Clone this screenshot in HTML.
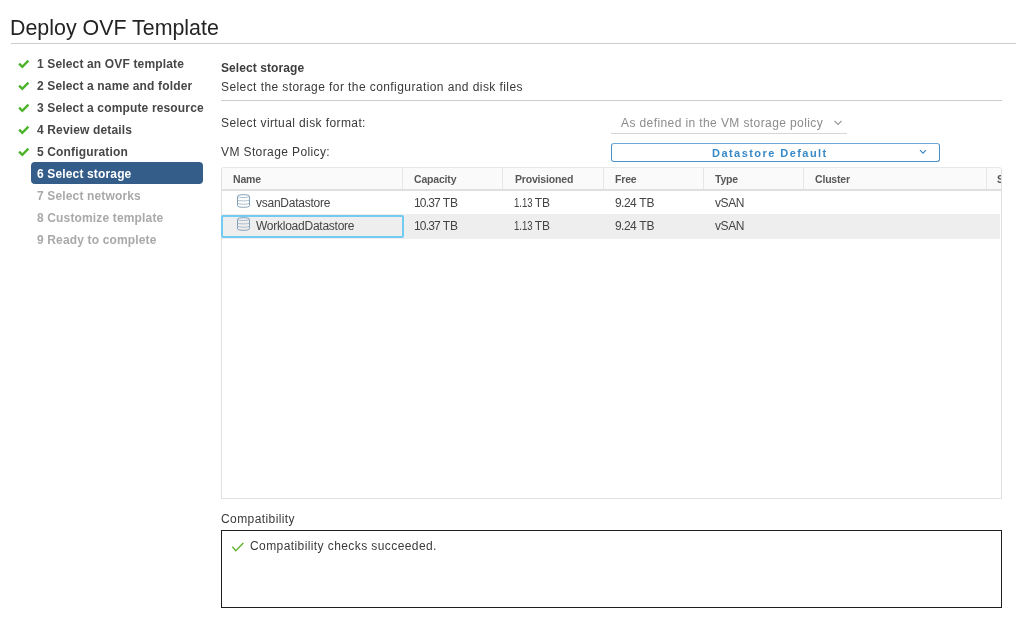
<!DOCTYPE html>
<html><head><meta charset="utf-8">
<style>
*{margin:0;padding:0;box-sizing:border-box}
html,body{width:1022px;height:622px;overflow:hidden;background:#fff}
body{position:relative;font-family:"Liberation Sans",sans-serif;color:#333}
.a{position:absolute;white-space:nowrap;will-change:transform}
.t{line-height:12px;height:12px}
.title{left:10px;top:18px;font-size:21.4px;line-height:21px;color:#242424}
.hr{position:absolute;height:1px;background:#ccc}
.nav{left:37px;font-size:12px;font-weight:bold;color:#474747;letter-spacing:0.15px}
.nav.off{color:#a9a9a9}
.nav.sel{color:#fff}
.chk{position:absolute;left:18px;width:12px;height:10px}
.sel-bg{position:absolute;left:31px;top:162px;width:172px;height:22px;background:#345d8a;border-radius:4px}
.reg{font-size:12px;letter-spacing:0.33px;color:#3a3a3a}
.th{font-size:10.5px;font-weight:bold;color:#585858;letter-spacing:-0.18px}
.td{font-size:12px;color:#444;letter-spacing:-0.25px}
.num{font-size:11.5px;letter-spacing:-0.35px}
</style></head>
<body>
<div class="a title">Deploy OVF Template</div>
<div class="hr" style="left:11px;top:43px;width:1005px"></div>

<!-- nav -->
<div class="sel-bg"></div>
<svg class="chk" style="top:59px" viewBox="0 0 12 10"><path d="M1.1 4.7 L4.3 7.9 L10.4 1.7" fill="none" stroke="#4db32b" stroke-width="2.4"/></svg>
<svg class="chk" style="top:81px" viewBox="0 0 12 10"><path d="M1.1 4.7 L4.3 7.9 L10.4 1.7" fill="none" stroke="#4db32b" stroke-width="2.4"/></svg>
<svg class="chk" style="top:103px" viewBox="0 0 12 10"><path d="M1.1 4.7 L4.3 7.9 L10.4 1.7" fill="none" stroke="#4db32b" stroke-width="2.4"/></svg>
<svg class="chk" style="top:125px" viewBox="0 0 12 10"><path d="M1.1 4.7 L4.3 7.9 L10.4 1.7" fill="none" stroke="#4db32b" stroke-width="2.4"/></svg>
<svg class="chk" style="top:147px" viewBox="0 0 12 10"><path d="M1.1 4.7 L4.3 7.9 L10.4 1.7" fill="none" stroke="#4db32b" stroke-width="2.4"/></svg>
<div class="a t nav" style="top:58px">1 Select an OVF template</div>
<div class="a t nav" style="top:80px">2 Select a name and folder</div>
<div class="a t nav" style="top:102px">3 Select a compute resource</div>
<div class="a t nav" style="top:124px">4 Review details</div>
<div class="a t nav" style="top:146px">5 Configuration</div>
<div class="a t nav sel" style="top:168px">6 Select storage</div>
<div class="a t nav off" style="top:190px">7 Select networks</div>
<div class="a t nav off" style="top:212px">8 Customize template</div>
<div class="a t nav off" style="top:234px">9 Ready to complete</div>

<!-- content -->
<div class="a t" style="left:221px;top:62px;font-size:12px;font-weight:bold;color:#3d3d3d;letter-spacing:0.08px">Select storage</div>
<div class="a t reg" style="left:221px;top:80.5px;letter-spacing:0.42px">Select the storage for the configuration and disk files</div>
<div class="hr" style="left:221px;top:100px;width:781px"></div>

<div class="a t reg" style="left:221px;top:117px;letter-spacing:0.4px">Select virtual disk format:</div>
<div class="a t reg" style="left:621px;top:117px;color:#8c8c8c;letter-spacing:0.4px">As defined in the VM storage policy</div>
<svg class="a" style="left:833px;top:119px" width="10" height="8" viewBox="0 0 10 8"><path d="M1.5 2 L5 5.5 L8.5 2" fill="none" stroke="#9a9a9a" stroke-width="1.1"/></svg>
<div class="hr" style="left:611px;top:133px;width:236px;background:#d6d6d6"></div>

<div class="a t reg" style="left:221px;top:146px;letter-spacing:0.39px">VM Storage Policy:</div>
<div class="a" style="left:611px;top:143px;width:329px;height:19px;border:1px solid #4b90c9;border-top-color:#6fa8d6;border-radius:3px"></div>
<div class="a t" style="left:712px;top:147px;font-size:11px;font-weight:bold;color:#3689c6;letter-spacing:1.45px">Datastore Default</div>
<svg class="a" style="left:918px;top:148px" width="10" height="8" viewBox="0 0 10 8"><path d="M2 2.2 L5 5.2 L8 2.2" fill="none" stroke="#3b87c2" stroke-width="1.2"/></svg>

<!-- table -->
<div class="a" style="left:221px;top:167px;width:781px;height:332px;border:1px solid #e0e0e0;border-top-color:#e8e8e8;border-radius:3px 3px 0 0;overflow:hidden">
  <div class="a" style="left:0;top:0;width:779px;height:23px;background:#fafafa;border-bottom:2px solid #dfdfdf"></div>
  <div class="a" style="left:180px;top:0;width:1px;height:21px;background:#e6e6e6"></div>
  <div class="a" style="left:280px;top:0;width:1px;height:21px;background:#e6e6e6"></div>
  <div class="a" style="left:381px;top:0;width:1px;height:21px;background:#e6e6e6"></div>
  <div class="a" style="left:481px;top:0;width:1px;height:21px;background:#e6e6e6"></div>
  <div class="a" style="left:581px;top:0;width:1px;height:21px;background:#e6e6e6"></div>
  <div class="a" style="left:764px;top:0;width:1px;height:21px;background:#e6e6e6"></div>
  <div class="a" style="left:0;top:46px;width:778px;height:25px;background:#eeeeee"></div>
</div>
<div class="a" style="left:221px;top:215px;width:183px;height:23px;border:2px solid #72ccf2;border-radius:2px"></div>
<div class="a t th" style="left:233px;top:173px">Name</div>
<div class="a t th" style="left:414px;top:173px">Capacity</div>
<div class="a t th" style="left:515px;top:173px">Provisioned</div>
<div class="a t th" style="left:615px;top:173px">Free</div>
<div class="a t th" style="left:715px;top:173px">Type</div>
<div class="a t th" style="left:815px;top:173px">Cluster</div>
<div class="a" style="left:990px;top:168px;width:11px;height:21px;overflow:hidden"><div class="a t th" style="left:7px;top:5px">S</div></div>

<svg class="a" style="left:236px;top:193px" width="15" height="16" viewBox="0 0 15 16"><g fill="none" stroke="#819fb7" stroke-width="1"><path d="M1.5 3.2 C1.5 1.2 13.5 1.2 13.5 3.2 L13.5 12.8 C13.5 14.8 1.5 14.8 1.5 12.8 Z"/><path d="M1.5 3.2 C1.5 5 13.5 5 13.5 3.2" stroke="#a9bccb"/><path d="M1.5 6.7 C1.5 8.3 13.5 8.3 13.5 6.7" stroke="#a9bccb"/><path d="M1.5 10 C1.5 11.6 13.5 11.6 13.5 10" stroke="#a9bccb"/></g></svg>
<svg class="a" style="left:236px;top:216px" width="15" height="16" viewBox="0 0 15 16"><g fill="none" stroke="#819fb7" stroke-width="1"><path d="M1.5 3.2 C1.5 1.2 13.5 1.2 13.5 3.2 L13.5 12.8 C13.5 14.8 1.5 14.8 1.5 12.8 Z"/><path d="M1.5 3.2 C1.5 5 13.5 5 13.5 3.2" stroke="#a9bccb"/><path d="M1.5 6.7 C1.5 8.3 13.5 8.3 13.5 6.7" stroke="#a9bccb"/><path d="M1.5 10 C1.5 11.6 13.5 11.6 13.5 10" stroke="#a9bccb"/></g></svg>
<div class="a t td" style="left:256px;top:197px">vsanDatastore</div>
<div class="a t td" style="left:414px;top:197px;letter-spacing:0"><span style="letter-spacing:-0.85px">10.37</span><span style="letter-spacing:-0.1px"> TB</span></div>
<div class="a t td" style="left:514px;top:197px;letter-spacing:0"><span style="display:inline-block;transform:scaleX(0.8);transform-origin:0 0;width:17.8px">1.13</span><span style="letter-spacing:-0.1px"> TB</span></div>
<div class="a t td" style="left:615px;top:197px;letter-spacing:0"><span style="letter-spacing:-0.55px">9.24</span><span style="letter-spacing:-0.1px"> TB</span></div>
<div class="a t td" style="left:715px;top:197px;letter-spacing:-0.4px">vSAN</div>
<div class="a t td" style="left:256px;top:220px">WorkloadDatastore</div>
<div class="a t td" style="left:414px;top:220px;letter-spacing:0"><span style="letter-spacing:-0.85px">10.37</span><span style="letter-spacing:-0.1px"> TB</span></div>
<div class="a t td" style="left:514px;top:220px;letter-spacing:0"><span style="display:inline-block;transform:scaleX(0.8);transform-origin:0 0;width:17.8px">1.13</span><span style="letter-spacing:-0.1px"> TB</span></div>
<div class="a t td" style="left:615px;top:220px;letter-spacing:0"><span style="letter-spacing:-0.55px">9.24</span><span style="letter-spacing:-0.1px"> TB</span></div>
<div class="a t td" style="left:715px;top:220px;letter-spacing:-0.4px">vSAN</div>

<!-- compatibility -->
<div class="a t reg" style="left:221px;top:513px;letter-spacing:0.41px">Compatibility</div>
<div class="a" style="left:221px;top:530px;width:781px;height:78px;border:1px solid #1e1e1e"></div>
<svg class="a" style="left:231px;top:541px" width="14" height="12" viewBox="0 0 14 12"><path d="M1.4 5.8 L4.8 9.8 L12.3 2" fill="none" stroke="#62b12c" stroke-width="1.4"/></svg>
<div class="a t reg" style="left:250px;top:540px;letter-spacing:0.41px">Compatibility checks succeeded.</div>
</body></html>
